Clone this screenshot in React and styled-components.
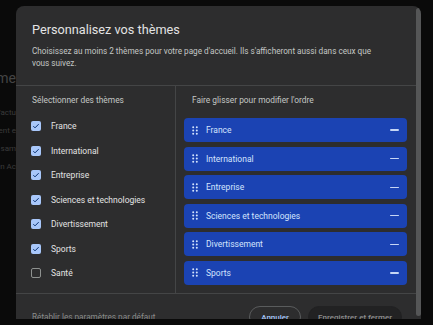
import React from "react";
import styled, { createGlobalStyle } from "styled-components";

const Global = createGlobalStyle`
  html, body { margin: 0; padding: 0; background: #0a0a0a; }
  body { font-family: Roboto, "Noto Sans", "Liberation Sans", sans-serif; width: 433px; height: 325px; overflow: hidden; }
`;

const Page = styled.div`
  position: relative;
  width: 433px;
  height: 325px;
  overflow: hidden;
  background: #0a0a0a;
`;

const BackdropCol = styled.div`
  width: 16px;
  overflow: hidden;
  display: flex;
  flex-direction: column;
  align-items: flex-end;
  padding-top: 70px;
  gap: 8px;
  color: #3a3a3a;
  font-size: 8px;
  line-height: 10px;
  white-space: nowrap;
`;

const BackdropHeading = styled.div`
  font-size: 14px;
  line-height: 16px;
  color: #444;
  margin-bottom: 14px;
`;

const Dialog = styled.div`
  position: absolute;
  left: 16px;
  top: 6px;
  width: 405px;
  height: 313px;
  background: #2d2d2e;
  border-radius: 8px 8px 0 0;
  overflow: hidden;
  display: flex;
`;

const Content = styled.div`
  flex: 1;
  min-width: 0;
`;

const ScrollTrack = styled.div`
  width: 5px;
  padding: 2px 0 3px;
  display: flex;
  flex-direction: column;
`;

const ScrollThumb = styled.div`
  flex: 1;
  background: #555657;
  border-radius: 3px;
`;

const Header = styled.div`
  padding: 15px 16px 16px 16px;
  border-bottom: 1px solid #444546;
`;

const Title = styled.h1`
  margin: 0;
  font-size: 12.7px;
  line-height: 18px;
  font-weight: 400;
  color: #e3e3e3;
`;

const Subtitle = styled.p`
  margin: 6px 0 0;
  font-size: 8.2px;
  line-height: 12px;
  color: #c4c7c5;
  padding-right: 10px;
`;

const Body = styled.div`
  display: grid;
  grid-template-columns: 159px 1fr;
  border-bottom: 1px solid #444546;
  height: 207px;
`;

const Column = styled.div`
  padding: ${(p) => (p.$right ? "8px 9px 0 8px" : "8px 0 0 16px")};
  border-left: ${(p) => (p.$right ? "1px solid #444546" : "none")};
`;

const ColumnTitle = styled.div`
  font-size: 8.4px;
  line-height: 12px;
  color: #c4c7c5;
  padding-left: ${(p) => (p.$right ? "8px" : "0")};
  margin-bottom: ${(p) => (p.$right ? "12px" : "7.75px")};
`;

const CheckRow = styled.label`
  display: flex;
  align-items: center;
  height: 24.5px;
  gap: 10px;
  font-size: 8.5px;
  color: #e3e3e3;
`;

const Box = styled.span`
  width: 10px;
  height: 10px;
  box-sizing: border-box;
  border-radius: 2px;
  margin-left: -1px;
  display: flex;
  align-items: center;
  justify-content: center;
  background: ${(p) => (p.$checked ? "#a8c7fa" : "transparent")};
  border: ${(p) => (p.$checked ? "none" : "1.3px solid #8e918f")};
`;

const List = styled.div`
  display: flex;
  flex-direction: column;
  gap: 4.6px;
`;

const Bar = styled.div`
  height: 24px;
  background: #1b43b3;
  border-radius: 4px;
  display: flex;
  align-items: center;
  padding: 0 8px 0 8px;
  color: #d3e3fd;
  font-size: 8.5px;
`;

const Handle = styled.svg`
  width: 6px;
  height: 9px;
  margin-right: 8px;
  flex: none;
`;

const BarLabel = styled.span`
  flex: 1;
`;

const Minus = styled.span`
  width: 9px;
  height: 1.3px;
  background: #c6d6f5;
  border-radius: 1px;
`;

const Footer = styled.div`
  display: flex;
  align-items: flex-start;
  padding: 12px 14px 10px 16px;
`;

const ResetLink = styled.span`
  flex: 1;
  font-size: 8.2px;
  line-height: 22px;
  color: #8a8c8b;
`;

const PillButton = styled.button`
  font-family: inherit;
  font-size: 8px;
  font-weight: 500;
  height: 22px;
  border-radius: 11px;
  padding: 0 ${(p) => (p.$primary ? "9px" : "11px")};
  margin-left: 7px;
  border: ${(p) => (p.$primary ? "1px solid #222223" : "1px solid #5a5c5d")};
  background: ${(p) => (p.$primary ? "#222223" : "transparent")};
  color: ${(p) => (p.$primary ? "#8e8e8e" : "#a8c7fa")};
`;

const themes = [
  { name: "France", checked: true },
  { name: "International", checked: true },
  { name: "Entreprise", checked: true },
  { name: "Sciences et technologies", checked: true },
  { name: "Divertissement", checked: true },
  { name: "Sports", checked: true },
  { name: "Santé", checked: false },
];

const Check = () => (
  <svg width="8" height="8" viewBox="0 0 24 24">
    <path d="M4 12.5l5 5L20 6.5" fill="none" stroke="#062e6f" strokeWidth="3" />
  </svg>
);

const DragDots = () => (
  <Handle viewBox="0 0 6 9">
    {[1.2, 4.5, 7.8].map((y) =>
      [1.2, 4.8].map((x) => <circle key={x + "-" + y} cx={x} cy={y} r="1" fill="#d3e3fd" />)
    )}
  </Handle>
);

export default function App() {
  return (
    <Page>
      <Global />
      <BackdropCol>
        <BackdropHeading>Thème</BackdropHeading>
        <div>s d'actu</div>
        <div>ment e</div>
        <div>au sam</div>
        <div>en Ac</div>
      </BackdropCol>
      <Dialog>
        <Content>
          <Header>
            <Title>Personnalisez vos thèmes</Title>
            <Subtitle>
              Choisissez au moins 2 thèmes pour votre page d'accueil. Ils s'afficheront aussi dans ceux que
              vous suivez.
            </Subtitle>
          </Header>
          <Body>
            <Column>
              <ColumnTitle>Sélectionner des thèmes</ColumnTitle>
              {themes.map((t) => (
                <CheckRow key={t.name}>
                  <Box $checked={t.checked}>{t.checked && <Check />}</Box>
                  {t.name}
                </CheckRow>
              ))}
            </Column>
            <Column $right>
              <ColumnTitle $right>Faire glisser pour modifier l'ordre</ColumnTitle>
              <List>
                {themes
                  .filter((t) => t.checked)
                  .map((t) => (
                    <Bar key={t.name}>
                      <DragDots />
                      <BarLabel>{t.name}</BarLabel>
                      <Minus />
                    </Bar>
                  ))}
              </List>
            </Column>
          </Body>
          <Footer>
            <ResetLink>Rétablir les paramètres par défaut</ResetLink>
            <PillButton>Annuler</PillButton>
            <PillButton $primary>Enregistrer et fermer</PillButton>
          </Footer>
        </Content>
        <ScrollTrack>
          <ScrollThumb />
        </ScrollTrack>
      </Dialog>
    </Page>
  );
}
